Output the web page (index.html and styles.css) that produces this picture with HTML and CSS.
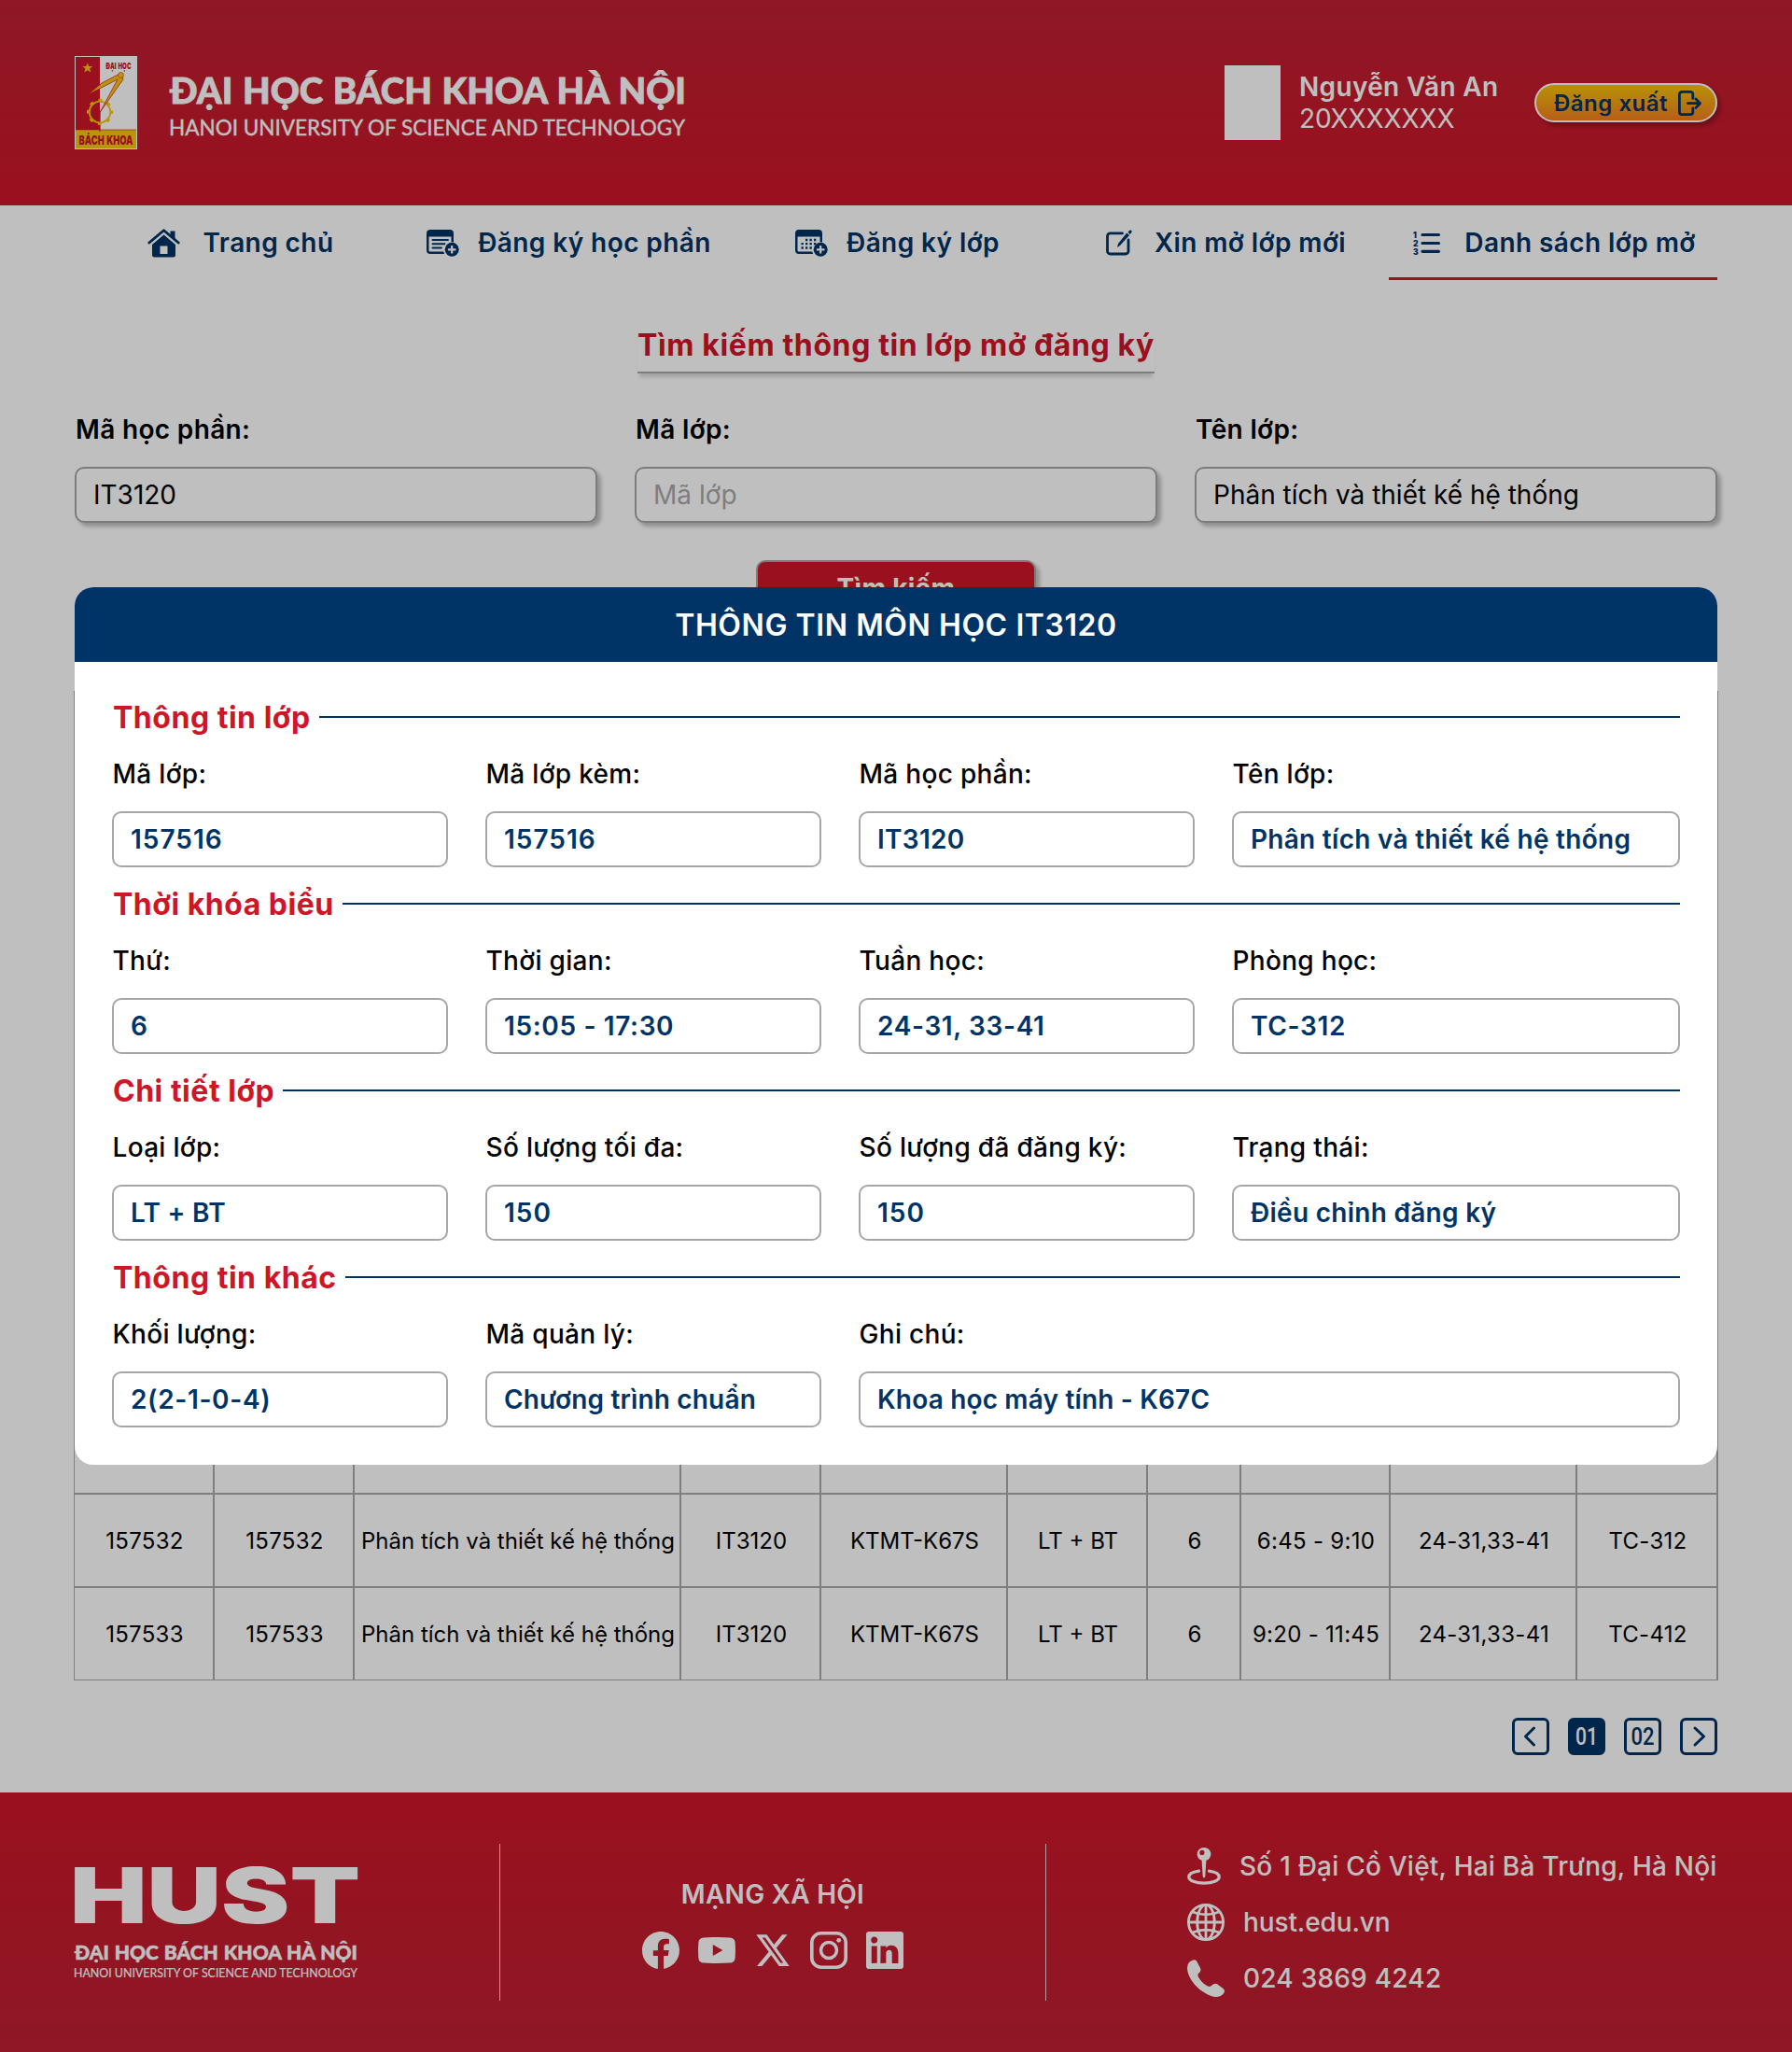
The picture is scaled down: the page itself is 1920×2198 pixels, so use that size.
FILE: index.html
```html
<!DOCTYPE html>
<html lang="vi">
<head>
<meta charset="utf-8">
<title>Danh sách lớp mở</title>
<link rel="stylesheet" href="styles.css">
</head>
<body>
<div class="page">
  <header class="header">
    <div class="brand">
      <svg class="brand-logo" viewBox="0 0 67 100" width="67" height="100">
        <rect width="67" height="100" fill="#fff"/>
        <rect x="1" y="1" width="26" height="78" fill="#ce1628"/>
        <rect x="1" y="79" width="65" height="20" fill="#f9c60c"/>
        <path d="M1 79h65" stroke="#ce1628" stroke-width=".6"/>
        <path d="M13.8 7.2l1.400 3.900h4.100l-3.200 2.500 1.200 4-3.500-2.300-3.500 2.300 1.200-4L8.300 11.100h4.100z" fill="#f9c60c"/>
        <text class="logo-word" x="33.500" y="14.400" font-size="9.600" textLength="27" lengthAdjust="spacingAndGlyphs">ĐẠI HỌC</text>
        <path d="M27 59v22" stroke="#ce1628" stroke-width="1.200"/>
        <circle cx="27" cy="60" r="11.300" fill="none" stroke="#f9c60c" stroke-width="1.800"/>
        <circle cx="27" cy="60" r="12.800" fill="none" stroke="#f9c60c" stroke-width="2.400" stroke-dasharray="4 6.053" stroke-dashoffset="2"/>
        <path d="M50 18L29 29 14 41.500 46 25 27 60.500 52 25z" fill="#f9c60c" stroke="#ce1628" stroke-width=".7"/>
        <circle cx="49.500" cy="20.500" r="3" fill="#f9c60c" stroke="#ce1628" stroke-width=".5"/>
        <text class="logo-word" x="4.500" y="94.600" font-size="13.600" textLength="58" lengthAdjust="spacingAndGlyphs">BÁCH KHOA</text>
      </svg>
      <svg class="brand-name" viewBox="0 0 560 100" width="560" height="100">
        <text class="wordmark-bold" x="1" y="51" font-size="37" textLength="553" lengthAdjust="spacingAndGlyphs" stroke-width=".8">ĐẠI HỌC BÁCH KHOA HÀ NỘI</text>
        <text class="wordmark" x="0" y="85.300" font-size="23.700" textLength="553" lengthAdjust="spacingAndGlyphs" stroke-width=".4">HANOI UNIVERSITY OF SCIENCE AND TECHNOLOGY</text>
      </svg>
    </div>
    <div class="account">
      <div class="avatar"></div>
      <div class="account-text">
        <div class="account-name">Nguyễn Văn An</div>
        <div class="account-id">20XXXXXXX</div>
      </div>
      <button class="logout">Đăng xuất
        <svg viewBox="0 0 25 27" width="25" height="27" fill="none" stroke="#036" stroke-width="2.800" stroke-linecap="round" stroke-linejoin="round"><path d="M15.800 8.500V4a2.600 2.600 0 0 0-2.600-2.600H4A2.600 2.600 0 0 0 1.400 4v19A2.600 2.600 0 0 0 4 25.600h9.200a2.600 2.600 0 0 0 2.600-2.600v-4.200M10.500 13.700h12.500M19 9l4.500 4.700L19 18.400"/></svg>
      </button>
    </div>
  </header>

  <nav class="tabs">
    <a class="tab tab-home">
      <svg viewBox="0 0 35 31" width="35" height="31"><path d="M24.500 2.500h5v9l-5-4.500z" fill="#036"/><path d="M1.800 15L17.500 1.800 33.200 15" fill="none" stroke="#036" stroke-width="2.800" stroke-linecap="round" stroke-linejoin="round"/><path d="M17.500 6.500L30 17v11a2.500 2.500 0 0 1-2.500 2.500h-20A2.500 2.500 0 0 1 5 28V17zM13.500 18.500v8.500h8v-8.500z" fill="#036" fill-rule="evenodd"/></svg>
      <span>Trang chủ</span>
    </a>
    <a class="tab">
      <svg viewBox="0 0 35 29" width="35" height="29"><path d="M4 0h21a4 4 0 0 1 4 4v9.500a9.300 9.300 0 0 0-2.500-.2V7.500h-24V22A1.500 1.500 0 0 0 4 23.500h14.200l1 2.500H4a4 4 0 0 1-4-4V4a4 4 0 0 1 4-4z" fill="#036"/><path d="M6.500 11h16.500M6.500 15.200h13M6.500 19.500h9.500" stroke="#036" stroke-width="1.900" stroke-linecap="round"/><circle cx="27.200" cy="21.300" r="7.500" fill="#036"/><path d="M27.200 17v8.600M22.900 21.300h8.600" stroke="#fff" stroke-width="2.200"/></svg>
      <span>Đăng ký học phần</span>
    </a>
    <a class="tab">
      <svg viewBox="0 0 35 29" width="35" height="29"><path d="M4 0h21a4 4 0 0 1 4 4v9.500a9.300 9.300 0 0 0-2.500-.2V7.500h-24V22A1.500 1.500 0 0 0 4 23.500h14.200l1 2.500H4a4 4 0 0 1-4-4V4a4 4 0 0 1 4-4z" fill="#036"/><path d="M6.500 15.200h16M6.500 19.500h12.500M11 11h12.500" stroke="#036" stroke-width="2.300" stroke-dasharray="2.300 2.200"/><circle cx="27.200" cy="21.300" r="7.500" fill="#036"/><path d="M27.200 17v8.600M22.900 21.300h8.600" stroke="#fff" stroke-width="2.200"/></svg>
      <span>Đăng ký lớp</span>
    </a>
    <a class="tab tab-request">
      <svg viewBox="0 0 28 28" width="28" height="28"><path d="M17.500 3.900H4.500a3 3 0 0 0-3 3V23a3 3 0 0 0 3 3H21a3 3 0 0 0 3-3V11" fill="none" stroke="#036" stroke-width="2.800" stroke-linecap="round"/><path d="M12 19l1-4L22.300 3.500l2.800 2.400L15 17z" fill="#036"/><path d="M23.500 2.800l1.700-2a1.500 1.500 0 0 1 2.200 2L25.800 4.900z" fill="#036"/></svg>
      <span>Xin mở lớp mới</span>
    </a>
    <a class="tab tab-list tab-active">
      <svg viewBox="0 0 30 25" width="30" height="25"><path d="M10 3.500h17.500M10 12.500h17.500M10 21.300h17.500" stroke="#036" stroke-width="3.200" stroke-linecap="round"/><g class="list-digits"><text x="0" y="6.500">1</text><text x="0" y="15.500">2</text><text x="0" y="24.500">3</text></g></svg>
      <span>Danh sách lớp mở</span>
    </a>
  </nav>

  <main class="main">
    <h1 class="page-title">Tìm kiếm thông tin lớp mở đăng ký</h1>
    <div class="search">
      <label class="search-field"><span>Mã học phần:</span><div class="input">IT3120</div></label>
      <label class="search-field"><span>Mã lớp:</span><div class="input input-empty">Mã lớp</div></label>
      <label class="search-field"><span>Tên lớp:</span><div class="input">Phân tích và thiết kế hệ thống</div></label>
    </div>
    <button class="search-button">Tìm kiếm</button>

    <div class="table">
      <div class="row row-tall"><div></div><div></div><div></div><div></div><div></div><div></div><div></div><div></div><div></div><div></div></div>
      <div class="row"><div class="num">157532</div><div class="num">157532</div><div>Phân tích và thiết kế hệ thống</div><div>IT3120</div><div>KTMT-K67S</div><div>LT + BT</div><div>6</div><div class="num">6:45 - 9:10</div><div class="num">24-31,33-41</div><div class="num">TC-312</div></div>
      <div class="row"><div class="num">157533</div><div class="num">157533</div><div>Phân tích và thiết kế hệ thống</div><div>IT3120</div><div>KTMT-K67S</div><div>LT + BT</div><div>6</div><div class="num">9:20 - 11:45</div><div class="num">24-31,33-41</div><div class="num">TC-412</div></div>
    </div>

    <div class="pager">
      <a class="pager-item"><svg viewBox="0 0 34 34" width="34" height="34"><path d="M20.500 8L11.500 17l9 9" class="chevron"/></svg></a>
      <a class="pager-item pager-current"><svg viewBox="0 0 34 34" width="34" height="34"><text x="5" y="26" textLength="24" lengthAdjust="spacingAndGlyphs">01</text></svg></a>
      <a class="pager-item"><svg viewBox="0 0 34 34" width="34" height="34"><text x="4.500" y="26" textLength="25" lengthAdjust="spacingAndGlyphs">02</text></svg></a>
      <a class="pager-item"><svg viewBox="0 0 34 34" width="34" height="34"><path d="M13 8l9.500 9-9.500 9" class="chevron"/></svg></a>
    </div>
  </main>

  <footer class="footer">
    <svg class="footer-logo" viewBox="0 0 304 120" width="304" height="120">
      <text class="hust" x="-5" y="60" font-size="82.500" textLength="311" lengthAdjust="spacingAndGlyphs">HUST</text>
      <text class="wordmark-bold" x="0" y="99" font-size="20.400" textLength="303" lengthAdjust="spacingAndGlyphs" stroke-width=".5">ĐẠI HỌC BÁCH KHOA HÀ NỘI</text>
      <text class="wordmark" x="-1" y="118.300" font-size="13.600" textLength="304" lengthAdjust="spacingAndGlyphs" stroke-width=".2">HANOI UNIVERSITY OF SCIENCE AND TECHNOLOGY</text>
    </svg>
    <div class="social">
      <div class="social-title">MẠNG XÃ HỘI</div>
      <div class="social-icons">
        <svg viewBox="0 0 16 16" width="40" height="40" fill="#fff"><path d="M16 8.049c0-4.446-3.582-8.050-8-8.050C3.580 0-.002 3.603-.002 8.050c0 4.017 2.926 7.347 6.750 7.951v-5.625h-2.030V8.050H6.750V6.275c0-2.017 1.195-3.131 3.022-3.131.876 0 1.791.157 1.791.157v1.980h-1.009c-.993 0-1.303.621-1.303 1.258v1.510h2.218l-.354 2.326H9.250V16c3.824-.604 6.750-3.934 6.750-7.951"/></svg>
        <svg viewBox="0 0 40 40" width="40" height="40"><path d="M6 6.400Q20 5.600 34 6.400Q39.200 6.800 39.600 11.500Q40.300 20 39.600 28.500Q39.200 33.200 34 33.600Q20 34.400 6 33.600Q.8 33.200.4 28.500Q-.3 20 .4 11.500Q.8 6.800 6 6.400zM15.800 14v12l10.600-6z" fill="#fff" fill-rule="evenodd"/></svg>
        <svg viewBox="0 0 40 40" width="40" height="40"><path transform="translate(2.300 1.500) scale(1.475 1.550)" d="M18.901 1.153h3.680l-8.040 9.190L24 22.846h-7.406l-5.800-7.584-6.638 7.584H.474l8.600-9.830L0 1.154h7.594l5.243 6.932ZM17.610 20.644h2.039L6.486 3.240H4.298Z" fill="#fff"/></svg>
        <svg viewBox="0 0 40 40" width="40" height="40" fill="none" stroke="#fff"><rect x="1.800" y="1.800" width="36.400" height="36.400" rx="10" stroke-width="3.600"/><circle cx="20" cy="20" r="8.500" stroke-width="3.500"/><circle cx="30.700" cy="9.300" r="2.400" fill="#fff" stroke="none"/></svg>
        <svg viewBox="0 0 16 16" width="40" height="40" fill="#fff"><path d="M0 1.146C0 .513.526 0 1.175 0h13.650C15.474 0 16 .513 16 1.146v13.708c0 .633-.526 1.146-1.175 1.146H1.175C.526 16 0 15.487 0 14.854zm4.700 12.400V6.169H2.300v7.400zm-1.200-8.500c.837 0 1.400-.6 1.400-1.400-.015-.8-.56-1.400-1.400-1.400S2.100 2.900 2.100 3.700c0 .8.560 1.350 1.400 1.350zm5.050 8.500V9.359c0-.216.016-.432.080-.586.173-.431.568-.878 1.232-.878.869 0 1.216.662 1.216 1.634v4.040h2.700V9.250c0-2.220-1.384-3.352-2.964-3.352-1.274 0-1.945.7-2.265 1.193V6.169h-2.350c.03.678 0 7.400 0 7.400z" fill-rule="evenodd"/></svg>
      </div>
    </div>
    <div class="contact">
      <div class="contact-row"><svg viewBox="0 0 36 40" width="36" height="40"><path d="M18 0a7 7 0 0 1 2.400 13.700L19.300 31q-1.300 3-2.600 0L15.600 13.700A7 7 0 0 1 18 0zM15.900 2.800a2.600 2.600 0 1 0 0 5.200 2.600 2.600 0 0 0 0-5.200z" fill="#fff" fill-rule="evenodd"/><path d="M12.500 25.100C6 26 1.800 28.500 1.800 31.500c0 4 7 6.700 16.200 6.700s16.200-2.700 16.200-6.700c0-3-4.200-5.500-10.700-6.400" fill="none" stroke="#fff" stroke-width="3.200" stroke-linecap="round"/></svg><span>Số 1 Đại Cồ Việt, Hai Bà Trưng, Hà Nội</span></div>
      <div class="contact-row contact-site"><svg viewBox="0 0 40 40" width="40" height="40" fill="none" stroke="#fff" stroke-width="2.800"><circle cx="20" cy="20" r="18.600"/><ellipse cx="20" cy="20" rx="9.300" ry="18.600"/><path d="M20 1v38M1 20h38M5 8.800q15 6 30 0M5 31.200q15-6 30 0"/></svg><span>hust.edu.vn</span></div>
      <div class="contact-row"><svg viewBox="0 0 40 40" width="40" height="40"><path d="M3.500 1.800Q8-1.200 10 1.500L14 9Q15.500 12 12.500 14.500Q10.500 16.500 12.200 19Q16 25.500 22 28.500Q24.500 29.800 26.500 27.500Q29.500 24.700 32.500 26.600L38.500 31Q41.300 33.500 39 36.200Q35 41 28.500 39.700C14 36 2.500 23 .3 12Q-.8 5 3.500 1.800z" fill="#fff"/></svg><span>024 3869 4242</span></div>
    </div>
  </footer>

  <div class="backdrop"></div>

  <section class="modal">
    <h2 class="modal-title">THÔNG TIN MÔN HỌC IT3120</h2>
    <div class="modal-body">
      <h3 class="group-title">Thông tin lớp</h3>
      <div class="fields">
        <div class="field"><span>Mã lớp:</span><div class="value value-code">157516</div></div>
        <div class="field"><span>Mã lớp kèm:</span><div class="value value-code">157516</div></div>
        <div class="field"><span>Mã học phần:</span><div class="value">IT3120</div></div>
        <div class="field"><span>Tên lớp:</span><div class="value">Phân tích và thiết kế hệ thống</div></div>
      </div>
      <h3 class="group-title">Thời khóa biểu</h3>
      <div class="fields">
        <div class="field"><span>Thứ:</span><div class="value">6</div></div>
        <div class="field"><span>Thời gian:</span><div class="value value-num">15:05 - 17:30</div></div>
        <div class="field"><span>Tuần học:</span><div class="value value-num">24-31, 33-41</div></div>
        <div class="field"><span>Phòng học:</span><div class="value value-num">TC-312</div></div>
      </div>
      <h3 class="group-title">Chi tiết lớp</h3>
      <div class="fields">
        <div class="field"><span>Loại lớp:</span><div class="value">LT + BT</div></div>
        <div class="field"><span>Số lượng tối đa:</span><div class="value value-code">150</div></div>
        <div class="field"><span>Số lượng đã đăng ký:</span><div class="value value-code">150</div></div>
        <div class="field"><span>Trạng thái:</span><div class="value">Điều chỉnh đăng ký</div></div>
      </div>
      <h3 class="group-title">Thông tin khác</h3>
      <div class="fields">
        <div class="field"><span>Khối lượng:</span><div class="value value-num">2(2-1-0-4)</div></div>
        <div class="field"><span>Mã quản lý:</span><div class="value value-tight">Chương trình chuẩn</div></div>
        <div class="field field-wide"><span>Ghi chú:</span><div class="value value-tight">Khoa học máy tính - K67C</div></div>
      </div>
    </div>
  </section>
</div>
</body>
</html>
```
FILE: styles.css
```css
* { box-sizing: border-box; }
body { margin: 0; font-family: Inter, "Liberation Sans", sans-serif; font-size: 28px; color: #000; background: #fff; }
h1, h2, h3 { margin: 0; }
svg { display: block; flex: none; overflow: visible; }
button { font-family: inherit; padding: 0; }

.page { position: relative; width: 1920px; height: 2198px; overflow: hidden; }

/* Header */
.header { height: 220px; padding: 0 80px; display: flex; justify-content: space-between; align-items: center; background: linear-gradient(#be2033, #ce1628); color: #fff; }
.brand { display: flex; gap: 34px; }
.logo-word { font-family: "Liberation Sans Narrow", Inter, sans-serif; font-weight: 900; fill: #ce1628; word-spacing: 1px; }
.wordmark-bold { font-family: Lato, sans-serif; font-weight: 900; fill: #fff; stroke: #fff; word-spacing: .04em; }
.wordmark { font-family: Lato, sans-serif; font-weight: 400; fill: #fff; stroke: #fff; }
.account { display: flex; align-items: center; }
.avatar { width: 60px; height: 80px; background: #fff; }
.account-text { width: 252px; margin: 0 0 0 20px; line-height: 34px; }
.account-name { font-weight: 600; letter-spacing: .012em; }
.account-id { letter-spacing: -.004em; }
.logout { width: 196px; height: 42px; padding-left: 4px; display: flex; justify-content: center; align-items: center; gap: 11px; border: 2px solid #fff; border-radius: 21px; background: linear-gradient(#f6c20a, #f57f20); box-shadow: 4px 4px 4px rgba(0, 0, 0, .25); color: #036; font-size: 24px; font-weight: 600; letter-spacing: .022em; }

/* Tabs */
.tabs { height: 80px; padding: 0 80px; display: grid; grid-template-columns: repeat(5, 352px); }
.tab { display: flex; align-items: center; justify-content: center; gap: 20px; padding: 3px 0 0 3px; border-bottom: 3px solid transparent; color: #036; font-weight: 600; letter-spacing: .015em; white-space: nowrap; }
.tab-home { gap: 25px; }
.tab-request { gap: 24px; }
.tab-list { gap: 25px; }
.tab-active { border-bottom-color: #ce1628; }
.list-digits { font-size: 8.5px; font-weight: 900; letter-spacing: 0; fill: #036; }

/* Search */
.main { height: 1620px; padding: 50px 80px 0; display: flex; flex-direction: column; }
.page-title { align-self: center; height: 50px; line-height: 40px; border-bottom: 2px solid #a9a9a9; box-shadow: 0 6px 4px -2px rgba(0, 0, 0, .15); color: #ce1628; font-size: 32px; font-weight: 700; letter-spacing: .019em; white-space: nowrap; }
.search { margin-top: 40px; display: grid; grid-template-columns: repeat(3, 1fr); gap: 40px; }
.search-field { display: flex; flex-direction: column; gap: 20px; line-height: 40px; font-weight: 600; }
.search-field span { padding-left: 1px; letter-spacing: .012em; }
.input { height: 60px; padding: 0 18px; border: 2px solid #a6a6a6; border-radius: 10px; background: #fff; box-shadow: 4px 4px 4px rgba(0, 0, 0, .25); line-height: 56px; font-weight: 400; }
.input-empty { color: #a9a9a9; }
.search-button { align-self: center; width: 300px; height: 60px; margin-top: 40px; border: 2px solid #a6a6a6; border-radius: 10px; background: #ce1628; box-shadow: 4px 4px 4px rgba(0, 0, 0, .25); color: #fff; font-size: 28px; font-weight: 700; letter-spacing: .01em; }

/* Results */
.table { width: 1762px; margin: 80px 0 0 -1px; flex: none; border: 1px solid #a9a9a9; font-size: 24px; }
.row { display: grid; grid-template-columns: 150px 150px 350px 150px 200px 150px 100px 160px 200px 150px; height: 100px; }
.row + .row { border-top: 2px solid #a9a9a9; }
.row-tall { height: 858px; }
.row > div { display: flex; justify-content: center; align-items: center; padding-left: 2px; border-right: 2px solid #a9a9a9; white-space: nowrap; }
.row > div:last-child { border-right-width: 1px; }
.row > .num { letter-spacing: .012em; }

/* Pager */
.pager { margin-top: 40px; display: flex; justify-content: flex-end; gap: 20px; }
.pager-item { width: 40px; height: 40px; border: 3px solid #036; border-radius: 6px; }
.pager-item text { font-family: Roboto, sans-serif; font-size: 26px; font-weight: 500; fill: #036; }
.pager-current { background: #036; }
.pager-current text { fill: #fff; }
.chevron { fill: none; stroke: #036; stroke-width: 3; stroke-linecap: round; stroke-linejoin: round; }

/* Footer */
.footer { height: 278px; padding: 55px 80px 0; display: flex; align-items: flex-start; background: linear-gradient(#ce1628, #be2033); color: #fff; }
.footer-logo { margin: 25px 151px 0 0; }
.hust { font-family: Inter, sans-serif; font-weight: 900; fill: #fff; }
.social { width: 586px; flex: none; height: 168px; padding-top: 34px; display: flex; flex-direction: column; align-items: center; gap: 20px; border: solid rgba(255, 255, 255, .8); border-width: 0 1px; }
.social-title { line-height: 40px; font-weight: 600; letter-spacing: .01em; }
.social-icons { display: flex; gap: 20px; }
.contact { margin: 4px 0 0 151px; display: flex; flex-direction: column; gap: 20px; }
.contact-row { display: flex; align-items: center; gap: 20px; height: 40px; font-weight: 500; letter-spacing: .008em; white-space: nowrap; }
.contact-site { letter-spacing: -.004em; }

/* Modal */
.backdrop { position: absolute; inset: 0; background: rgba(0, 0, 0, .25); }
.modal { position: absolute; top: 629px; left: 80px; width: 1760px; height: 940px; border-radius: 20px; background: #fff; overflow: hidden; }
.modal-title { height: 80px; background: #036; color: #fff; font-size: 32px; font-weight: 600; letter-spacing: .018em; line-height: 81px; text-align: center; }
.modal-body { padding: 40px; }
.group-title { height: 40px; padding: 0 0 2px 1px; display: flex; align-items: center; gap: 9px; color: #ce1628; font-size: 32px; font-weight: 700; letter-spacing: .016em; white-space: nowrap; }
.group-title::after { content: ""; flex: 1; height: 2px; background: #036; }
.fields { margin: 20px 0; display: grid; grid-template-columns: 360px 360px 360px 480px; gap: 40px; }
.field { display: flex; flex-direction: column; gap: 20px; line-height: 40px; font-weight: 500; }
.field > span { padding-left: .5px; letter-spacing: .011em; }
.field-wide { grid-column: span 2; }
.value { height: 60px; padding: 0 18px; border: 2px solid #a6a6a6; border-radius: 10px; line-height: 56px; color: #036; font-weight: 600; letter-spacing: .01em; white-space: nowrap; }
.value-num { letter-spacing: .023em; }
.value-code { letter-spacing: .036em; }
.value-tight { letter-spacing: .006em; }
```
